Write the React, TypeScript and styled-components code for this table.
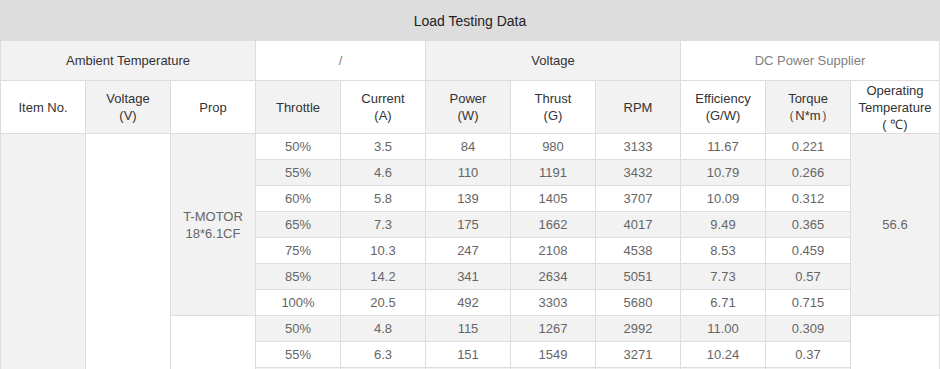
import * as React from "react"
import styled, { createGlobalStyle } from "styled-components"

const GlobalStyle = createGlobalStyle`
  html, body {
    margin: 0;
    padding: 0;
    background: #ffffff;
  }
  body {
    font-family: "Liberation Sans", Arial, sans-serif;
  }
`

const Table = styled.table`
  width: 940px;
  table-layout: fixed;
  border-collapse: collapse;
  font-size: 13px;
`

const Col = styled.col<{ $w?: number }>`
  width: ${p => (p.$w ? `${p.$w}px` : "auto")};
`

const TitleCell = styled.th`
  height: 39px;
  padding: 0;
  background: #dddddd;
  border: 1px solid #dddddd;
  color: #222222;
  font-size: 14px;
  font-weight: normal;
  text-align: center;
  vertical-align: middle;
`

const Row = styled.tr<{ $h: number }>`
  height: ${p => p.$h}px;
`

const Cell = styled.td<{ $shade?: boolean; $tone?: "head" | "data" | "muted" }>`
  padding: 0 2px;
  border: 1px solid #dddddd;
  background: ${p => (p.$shade ? "#f2f2f2" : "#ffffff")};
  color: ${p =>
    p.$tone === "head" ? "#333333" : p.$tone === "muted" ? "#808080" : "#666666"};
  text-align: center;
  vertical-align: middle;
  line-height: 17px;
  white-space: pre-line;
`

type DataRow = [string, string, string, string, string, string, string]

const groupOne: DataRow[] = [
  ["50%", "3.5", "84", "980", "3133", "11.67", "0.221"],
  ["55%", "4.6", "110", "1191", "3432", "10.79", "0.266"],
  ["60%", "5.8", "139", "1405", "3707", "10.09", "0.312"],
  ["65%", "7.3", "175", "1662", "4017", "9.49", "0.365"],
  ["75%", "10.3", "247", "2108", "4538", "8.53", "0.459"],
  ["85%", "14.2", "341", "2634", "5051", "7.73", "0.57"],
  ["100%", "20.5", "492", "3303", "5680", "6.71", "0.715"],
]

const groupTwo: DataRow[] = [
  ["50%", "4.8", "115", "1267", "2992", "11.00", "0.309"],
  ["55%", "6.3", "151", "1549", "3271", "10.24", "0.37"],
  ["60%", "8.0", "192", "1872", "3560", "9.75", "0.435"],
  ["65%", "10.0", "240", "2157", "3825", "8.99", "0.501"],
  ["75%", "14.1", "338", "2752", "4303", "8.14", "0.630"],
  ["85%", "19.4", "466", "3290", "4718", "7.06", "0.752"],
  ["100%", "27.9", "670", "4061", "5207", "6.06", "0.931"],
]

const headers = [
  "Item No.",
  "Voltage\n(V)",
  "Prop",
  "Throttle",
  "Current\n(A)",
  "Power\n(W)",
  "Thrust\n(G)",
  "RPM",
  "Efficiency\n(G/W)",
  "Torque\n（N*m）",
  "Operating\nTemperature\n( ℃)",
]

const total = groupOne.length + groupTwo.length

const App: React.FC = () => {
  const renderGroup = (
    rows: DataRow[],
    offset: number,
    prop: string,
    temp: string,
    shade: boolean
  ) =>
    rows.map((r, i) => {
      const index = offset + i
      const striped = index % 2 === 1
      return (
        <Row $h={26} key={index}>
          {index === 0 && (
            <>
              <Cell rowSpan={total} $shade />
              <Cell rowSpan={total} />
            </>
          )}
          {i === 0 && (
            <Cell rowSpan={rows.length} $shade={shade}>
              {prop}
            </Cell>
          )}
          {r.map((v, j) => (
            <Cell key={j} $shade={striped}>
              {v}
            </Cell>
          ))}
          {i === 0 && (
            <Cell rowSpan={rows.length} $shade={shade}>
              {temp}
            </Cell>
          )}
        </Row>
      )
    })

  return (
    <>
      <GlobalStyle />
      <Table>
        <colgroup>
          {headers.slice(0, 10).map(h => (
            <Col key={h} $w={85} />
          ))}
          <Col />
        </colgroup>
        <tbody>
          <tr>
            <TitleCell colSpan={11}>Load Testing Data</TitleCell>
          </tr>
          <Row $h={40}>
            <Cell colSpan={3} $shade $tone="head">
              Ambient Temperature
            </Cell>
            <Cell colSpan={2} $tone="muted">
              /
            </Cell>
            <Cell colSpan={3} $shade $tone="head">
              Voltage
            </Cell>
            <Cell colSpan={3} $tone="muted">
              DC Power Supplier
            </Cell>
          </Row>
          <Row $h={53}>
            {headers.map((h, i) => (
              <Cell key={h} $shade={i % 2 === 1} $tone="head">
                {h}
              </Cell>
            ))}
          </Row>
          {renderGroup(groupOne, 0, "T-MOTOR\n18*6.1CF", "56.6", true)}
          {renderGroup(groupTwo, groupOne.length, "", "", false)}
        </tbody>
      </Table>
    </>
  )
}

export default App
